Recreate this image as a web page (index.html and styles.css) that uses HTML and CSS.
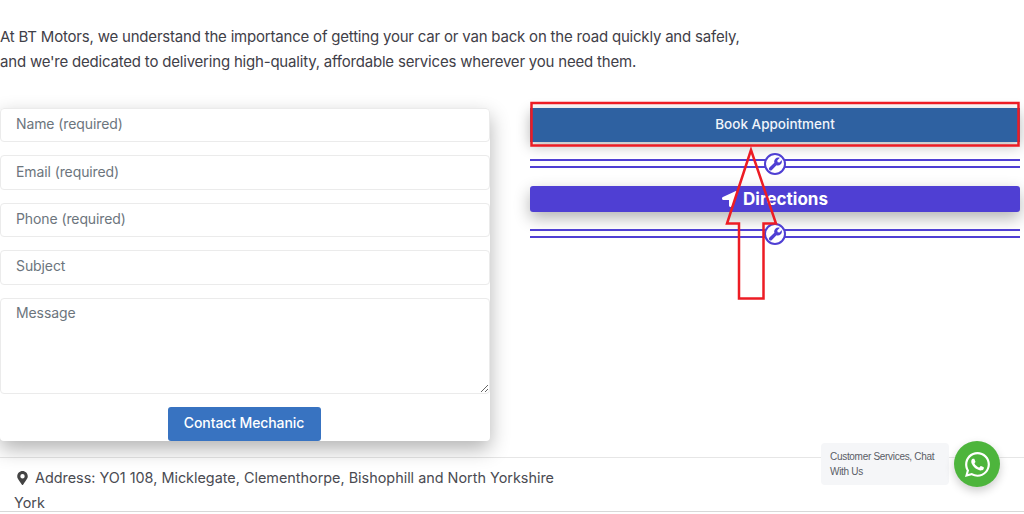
FILE: index.html
```html
<!DOCTYPE html>
<html lang="en">
<head>
    <meta charset="UTF-8">
    <meta name="viewport" content="width=device-width, initial-scale=1.0">
    <title>BT Motors</title>
    <link rel="stylesheet" href="styles.css">
</head>
<body>
    <section class="intro">
        <p>At BT Motors, we understand the importance of getting your car or van back on the road quickly and safely,<br>and we're dedicated to delivering high-quality, affordable services wherever you need them.</p>
    </section>

    <section class="contact-row">
        <form class="contact-card">
            <input class="field" type="text" placeholder="Name (required)">
            <input class="field" type="text" placeholder="Email (required)">
            <input class="field" type="text" placeholder="Phone (required)">
            <input class="field" type="text" placeholder="Subject">
            <textarea class="field field-message" placeholder="Message"></textarea>
            <button type="button" class="contact-btn">Contact Mechanic</button>
        </form>

        <div class="actions">
            <a href="#" class="book-btn">Book Appointment</a>
            <div class="divider">
                <span class="divider-icon">
                    <svg viewBox="0 0 24 24" width="15" height="15"><path fill="#4f3fd3" d="M22.7 7.1c-.1-.4-.6-.5-.9-.2l-3.400 3.400-3-.5-.5-3 3.400-3.400c.3-.3.2-.8-.2-.9-2.200-.6-4.600 0-6.300 1.700-1.800 1.800-2.300 4.400-1.600 6.700L2.300 18.300c-1.100 1.100-1.100 2.900 0 3.900 1.100 1.100 2.900 1.100 3.900 0l7.400-7.400c2.300.7 4.900.2 6.700-1.600 1.700-1.700 2.300-4.100 1.700-6.100z"/></svg>
                </span>
            </div>
            <a href="#" class="directions-btn">
                <svg viewBox="0 0 512 512" width="16" height="16"><path fill="#fff" d="M444.520 3.520L28.740 195.420c-47.970 22.390-31.980 92.750 19.190 92.750h175.910v175.910c0 51.170 70.360 67.170 92.750 19.190l191.900-415.780c15.990-38.390-25.590-79.970-63.970-63.970z"/></svg>
                Directions
            </a>
            <div class="divider">
                <span class="divider-icon">
                    <svg viewBox="0 0 24 24" width="15" height="15"><path fill="#4f3fd3" d="M22.7 7.1c-.1-.4-.6-.5-.9-.2l-3.400 3.400-3-.5-.5-3 3.400-3.400c.3-.3.2-.8-.2-.9-2.200-.6-4.600 0-6.300 1.700-1.800 1.800-2.300 4.400-1.600 6.700L2.300 18.300c-1.100 1.100-1.100 2.900 0 3.900 1.100 1.100 2.900 1.100 3.900 0l7.400-7.400c2.300.7 4.900.2 6.700-1.600 1.700-1.700 2.300-4.100 1.700-6.100z"/></svg>
                </span>
            </div>
        </div>
    </section>

    <footer class="address">
        <p class="address-line">
            <svg viewBox="0 0 384 512" width="11" height="14"><path fill="#444" d="M172 502C27 291 0 267 0 192 0 86 86 0 192 0s192 86 192 192c0 75-27 99-172 310-9 13-31 13-40 0zm20-230a80 80 0 1 0 0-160 80 80 0 0 0 0 160z"/></svg>
            Address: YO1 108, Micklegate, Clementhorpe, Bishophill and North Yorkshire
        </p>
        <p class="address-city">York</p>
    </footer>

    <!-- red markup drawn on top of the screenshot -->
    <svg class="markup" viewBox="0 0 1024 514" width="1024" height="514">
        <rect x="531.500" y="103" width="487" height="42.500" fill="none" stroke="#ed1c24" stroke-width="2.500"/>
        <path d="M751 150 L727 223.500 L739 223.500 L739 298.500 L763.500 298.500 L763.500 223.500 L776 223.500 Z" fill="none" stroke="#ed1c24" stroke-width="2.500"/>
    </svg>

    <div class="chat-widget">
        <div class="chat-label">Customer Services, Chat With Us</div>
        <a href="#" class="chat-btn">
            <svg viewBox="0 0 24 24" width="25" height="25"><path fill="#fff" d="M17.500 14.400c-.3-.1-1.800-.9-2-1-.3-.1-.5-.1-.7.200-.2.300-.8 1-.9 1.100-.2.200-.3.200-.6.100-.3-.1-1.300-.5-2.400-1.500-.9-.8-1.500-1.800-1.700-2.100-.2-.3 0-.5.100-.6l.4-.5c.1-.2.200-.3.300-.5.100-.2 0-.4 0-.5-.1-.1-.7-1.600-.9-2.200-.2-.6-.5-.5-.7-.5h-.6c-.2 0-.5.100-.8.400-.3.300-1 1-1 2.500s1.100 2.900 1.200 3.100c.1.200 2.100 3.200 5.100 4.500.7.300 1.300.5 1.700.6.700.2 1.400.2 1.900.1.600-.1 1.800-.7 2-1.400.2-.7.200-1.300.2-1.400-.1-.1-.3-.2-.6-.3zM12 21.800c-1.800 0-3.500-.5-5-1.400l-.4-.2-3.700 1 1-3.600-.2-.4c-1-1.600-1.500-3.400-1.500-5.200C2.200 6.500 6.600 2.200 12 2.200c2.600 0 5.100 1 6.900 2.900 1.900 1.900 2.900 4.300 2.900 6.900 0 5.400-4.400 9.800-9.800 9.800zM20.500 3.500C18.200 1.200 15.200 0 12 0 5.400 0 .1 5.300.1 11.900c0 2.100.5 4.100 1.600 5.900L0 24l6.300-1.700c1.700.9 3.700 1.400 5.700 1.400 6.600 0 11.900-5.300 11.900-11.900 0-3.200-1.200-6.200-3.400-8.300z"/></svg>
        </a>
    </div>
</body>
</html>
```

FILE: styles.css
```css
/* Global Styles */
html, body {
    height: 514px;
    overflow: hidden;
}

body {
    font-family: 'Inter', sans-serif;
    margin: 0;
    padding: 0;
    background-color: #ffffff;
    color: #3f4048;
    position: relative;
}

/* Intro */
.intro {
    box-sizing: border-box;
    height: 108px;
    padding-top: 24px;
    font-size: 15px;
    line-height: 25px;
    letter-spacing: -0.2px;
}

.intro p {
    margin: 0;
}

/* Contact row */
.contact-row {
    display: flex;
    gap: 40px;
    width: 1020px;
}

.contact-card {
    width: 490px;
    height: 333.100px;
    display: flex;
    flex-direction: column;
    gap: 13px;
    background: #ffffff;
    border-radius: 4px;
    box-shadow: 0 8px 20px rgba(0, 0, 0, 0.3);
}

.field {
    display: block;
    box-sizing: border-box;
    width: 100%;
    height: 34.400px;
    padding: 0 15px 3px;
    border: 1px solid #ebebeb;
    border-radius: 4px;
    background: #ffffff;
    font-family: 'Inter', sans-serif;
    font-size: 14px;
    letter-spacing: -0.1px;
    color: #495057;
    outline: none;
}

.field::placeholder {
    color: #6c757d;
    opacity: 1;
}

.field-message {
    height: 96.500px;
    padding: 5px 15px 0;
}

.contact-btn {
    align-self: center;
    width: 153px;
    height: 34px;
    margin-right: 2px;
    padding: 0 0 3px;
    border: 0;
    border-radius: 3px;
    background: #3873c1;
    color: #ffffff;
    font-family: 'Inter', sans-serif;
    font-size: 14px;
    font-weight: 500;
    letter-spacing: -0.1px;
}

/* Right column */
.actions {
    flex: 1;
}

.book-btn {
    display: flex;
    justify-content: center;
    align-items: center;
    box-sizing: border-box;
    height: 34px;
    padding-bottom: 3px;
    background: #2e61a1;
    color: #f0f4fa;
    font-size: 13.500px;
    font-weight: 500;
    text-decoration: none;
    box-shadow: 0 4px 14px rgba(0, 0, 0, 0.28);
}

.divider {
    display: flex;
    justify-content: center;
    align-items: center;
    height: 5px;
    margin: 17px 0 18px;
    border-top: 2px solid #4f3fd3;
    border-bottom: 2px solid #4f3fd3;
}

.divider-icon {
    display: flex;
    justify-content: center;
    align-items: center;
    flex-shrink: 0;
    box-sizing: border-box;
    width: 22px;
    height: 22px;
    border: 2px solid #4f3fd3;
    border-radius: 50%;
    background: #ffffff;
}

.directions-btn {
    display: flex;
    justify-content: center;
    align-items: center;
    gap: 5px;
    height: 26px;
    background: #4f3fd3;
    border-radius: 3px;
    color: #ffffff;
    font-size: 17px;
    font-weight: 700;
    text-decoration: none;
    box-shadow: 0 6px 16px rgba(0, 0, 0, 0.3);
}

/* Address */
.address {
    margin-top: 16px;
    height: 53px;
    background: #ffffff;
    border-top: 1px solid #e6e6e6;
    border-bottom: 1px solid #d8d8d8;
    font-size: 14.400px;
    line-height: 25px;
    color: #4a4b52;
}

.address p {
    margin: 0;
}

.address-line {
    display: flex;
    align-items: center;
    gap: 7px;
    padding: 7px 0 0 17px;
}

.address-city {
    padding-left: 14px;
}

/* Red markup over the page */
.markup {
    position: absolute;
    top: 0;
    left: 0;
    pointer-events: none;
}

/* Chat widget */
.chat-widget {
    position: absolute;
    top: 441px;
    left: 821px;
    display: flex;
    align-items: center;
    gap: 5px;
}

.chat-label {
    box-sizing: border-box;
    width: 128px;
    height: 42px;
    padding: 6px 6px 6px 9px;
    background: #f5f6f8;
    border-radius: 4px;
    font-family: 'Liberation Sans', sans-serif;
    font-size: 10px;
    letter-spacing: -0.3px;
    line-height: 15px;
    color: #5a5d66;
}

.chat-btn {
    display: flex;
    justify-content: center;
    align-items: center;
    width: 46px;
    height: 46px;
    border-radius: 50%;
    background: #4db53c;
    box-shadow: 0 4px 10px rgba(0, 0, 0, 0.2);
}
```
